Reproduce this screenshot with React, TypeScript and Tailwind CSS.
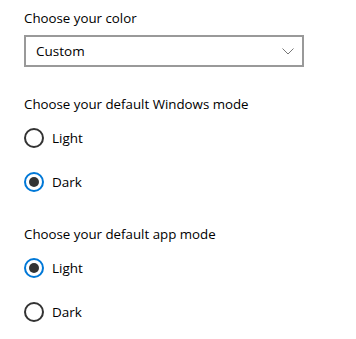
import React, { useState } from 'react';

interface RadioProps {
  label: string;
  checked: boolean;
  onSelect: () => void;
}

const Radio: React.FC<RadioProps> = ({ label, checked, onSelect }) => (
  <button type="button" onClick={onSelect} className="flex h-11 items-center gap-2 text-left">
    <span
      className={`flex h-5 w-5 items-center justify-center rounded-full border-2 ${
        checked ? 'border-[#0078d7]' : 'border-[#333333]'
      }`}
    >
      {checked && <span className="h-2.5 w-2.5 rounded-full bg-[#333333]" />}
    </span>
    <span className="text-[13.5px] text-black">{label}</span>
  </button>
);

const Section: React.FC<{ title: string; value: string; setValue: (v: string) => void }> = ({ title, value, setValue }) => (
  <div className="flex flex-col">
    <p className="mb-0.5 h-5 text-[13.3px] leading-5 text-black">{title}</p>
    <Radio label="Light" checked={value === 'light'} onSelect={() => setValue('light')} />
    <Radio label="Dark" checked={value === 'dark'} onSelect={() => setValue('dark')} />
  </div>
);

export default function App() {
  const [windowsMode, setWindowsMode] = useState('dark');
  const [appMode, setAppMode] = useState('light');

  return (
    <div className="flex h-[339px] w-[356px] flex-col bg-white pl-6 pt-2 font-['Open_Sans',sans-serif]">
      <p className="h-5 text-[13.3px] leading-5 text-black">Choose your color</p>
      <div className="mt-[7px] flex h-8 w-[280px] items-center justify-between border-2 border-[#999999] pl-2.5 pr-2">
        <span className="text-[13.5px] text-black">Custom</span>
        <svg width="12" height="7" viewBox="0 0 12 7" fill="none">
          <path d="M0.5 0.5 L6 6 L11.5 0.5" stroke="#777777" strokeWidth="1" />
        </svg>
      </div>
      <div className="mt-[27px]">
        <Section title="Choose your default Windows mode" value={windowsMode} setValue={setWindowsMode} />
      </div>
      <div className="mt-5">
        <Section title="Choose your default app mode" value={appMode} setValue={setAppMode} />
      </div>
    </div>
  );
}
